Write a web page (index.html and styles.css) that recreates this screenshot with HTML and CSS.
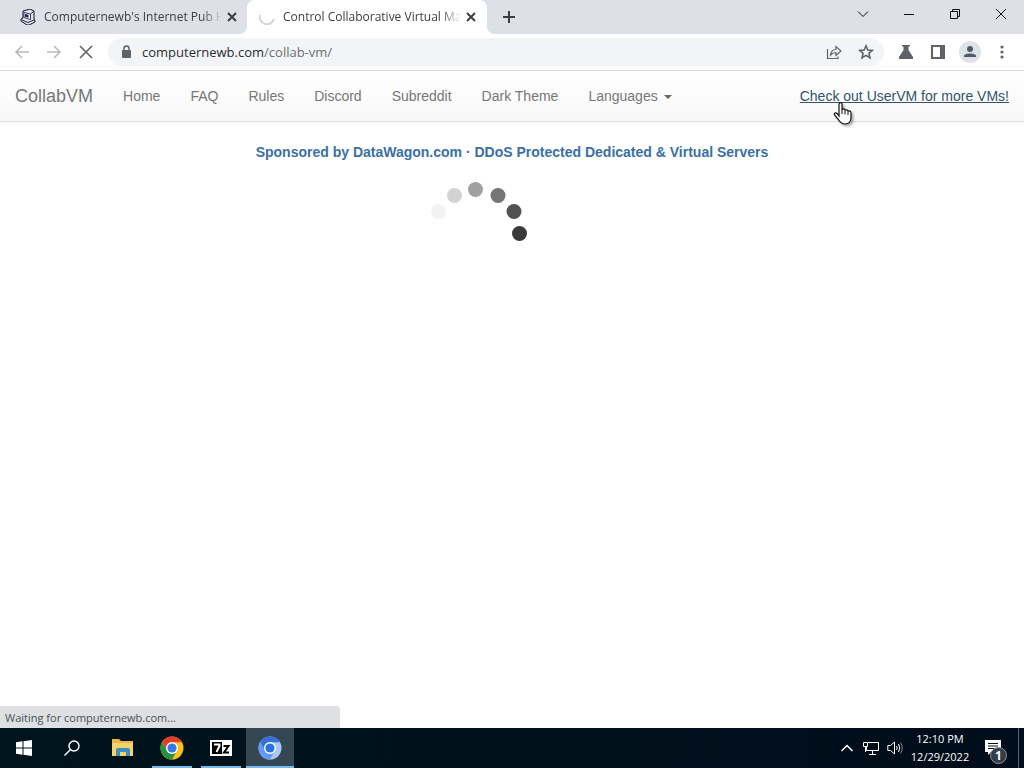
FILE: index.html
```html
<!DOCTYPE html>
<html lang="en">
<head>
<meta charset="utf-8">
<title>Control Collaborative Virtual Machines</title>
<link rel="stylesheet" href="styles.css">
</head>
<body>
<header class="tab-strip">
  <div class="tab">
    <svg class="tab-icon" viewBox="0 0 16 16" aria-hidden="true">
      <path d="M3 2 10 0 14 2V10L15 12V13L9 16H7L1 12V10L3 9Z" fill="#dfe2e8" stroke="#101020"/>
      <path d="M4 3.500 10.500 5V10.500L4 8.500Z" fill="#fff" stroke="#151525" stroke-width=".8"/>
      <path d="M5 5 8.500 5.800V8.800L5 7.800Z" fill="#101a90"/>
      <path d="M10.500 5 13.500 2.500M2 11 8 13.500 14 11" fill="none" stroke="#151525" stroke-width=".9"/>
    </svg>
    <span class="tab-title">Computernewb's Internet Pub Ho</span>
    <button class="tab-close" aria-label="Close tab"><svg viewBox="0 0 16 16"><path d="M4 4 12 12M12 4 4 12"/></svg></button>
  </div>
  <div class="tab tab-active">
    <svg class="tab-icon" viewBox="0 0 16 16" aria-hidden="true"><path d="M1 6A7 7 0 0 0 15 10" fill="none" stroke="#d3d5d9" stroke-width="2"/></svg>
    <span class="tab-title">Control Collaborative Virtual Mac</span>
    <button class="tab-close" aria-label="Close tab"><svg viewBox="0 0 16 16"><path d="M4 4 12 12M12 4 4 12"/></svg></button>
  </div>
  <button class="new-tab" aria-label="New tab"><svg viewBox="0 0 16 16"><path d="M8 2V14M2 8H14"/></svg></button>
  <div class="window-controls">
    <button aria-label="Search tabs"><svg viewBox="0 0 12 12"><path d="M1 3.500 6 8.500 11 3.500"/></svg></button>
    <button aria-label="Minimize"><svg viewBox="0 0 12 12"><path d="M1 6.500H11"/></svg></button>
    <button aria-label="Restore"><svg viewBox="0 0 12 12"><path d="M1.500 3.500H8.500V10.500H1.500ZM3.500 3.500V1.500H10.500V8.500H8.500"/></svg></button>
    <button aria-label="Close"><svg viewBox="0 0 12 12"><path d="M1 1 11 11M11 1 1 11"/></svg></button>
  </div>
</header>

<div class="toolbar">
  <div class="tool-group">
    <button class="tool faded" aria-label="Back"><svg viewBox="0 0 16 16"><path class="line" d="M15 8H2M8 2 2 8 8 14"/></svg></button>
    <button class="tool faded" aria-label="Forward"><svg viewBox="0 0 16 16"><path class="line" d="M1 8H14M8 2 14 8 8 14"/></svg></button>
    <button class="tool" aria-label="Stop"><svg viewBox="0 0 16 16"><path class="line" d="M2 2 14 14M14 2 2 14"/></svg></button>
  </div>
  <div class="address">
    <svg class="lock" viewBox="0 0 16 16" aria-hidden="true"><rect x="4" y="6" width="9" height="8" rx="1" fill="#5f6368"/><path d="M6 6.500V4.500A2.500 2.500 0 0 1 11 4.500V6.500" fill="none" stroke="#5f6368" stroke-width="1.500"/></svg>
    <a class="url" href="#">computernewb.com<span class="url-path">/collab-vm/</span></a>
    <button class="tool" aria-label="Share"><svg viewBox="0 0 16 16"><path class="thin" d="M1.500 5V14.500H12V12.500M4.500 11C5 7.500 7 5.500 10 5.500V2.500L15 7 10 11.500V8.500C7.500 8.500 6 9.200 4.500 11Z"/></svg></button>
    <button class="tool" aria-label="Bookmark"><svg viewBox="0 0 16 16"><path class="thick" d="M8 1.800 9.800 6 14.300 6.400 10.900 9.300 12 13.800 8 11.400 4 13.800 5.100 9.300 1.700 6.400 6.200 6Z"/></svg></button>
  </div>
  <div class="tool-group">
    <button class="tool" aria-label="Experiments"><svg viewBox="0 0 16 16"><path d="M4 1H12V2.500H10.500V6L15 13V15H1V13L5.500 6V2.500H4Z" fill="#5f6368"/></svg></button>
    <button class="tool" aria-label="Side panel"><svg viewBox="0 0 16 16"><path d="M1 1H15V15H1ZM3 3V13H10V3Z" fill="#5f6368" fill-rule="evenodd"/></svg></button>
    <button class="tool avatar" aria-label="Profile"><svg viewBox="0 0 22 22"><circle cx="11" cy="11" r="11" fill="#dee3ea"/><circle cx="11" cy="8" r="3" fill="#4f5b66"/><path d="M5 16V15C5 11.500 17 11.500 17 15V16Z" fill="#4f5b66"/></svg></button>
    <button class="tool" aria-label="Menu"><svg viewBox="0 0 16 16" fill="#5f6368"><circle cx="8" cy="3" r="1.600"/><circle cx="8" cy="8" r="1.600"/><circle cx="8" cy="13" r="1.600"/></svg></button>
  </div>
</div>

<main class="page">
  <nav class="navbar">
    <a class="brand" href="#">CollabVM</a>
    <a class="nav-link" href="#">Home</a>
    <a class="nav-link" href="#">FAQ</a>
    <a class="nav-link" href="#">Rules</a>
    <a class="nav-link" href="#">Discord</a>
    <a class="nav-link" href="#">Subreddit</a>
    <a class="nav-link" href="#">Dark Theme</a>
    <a class="nav-link" href="#">Languages<span class="caret"></span></a>
    <div class="promo">
      <a class="promo-link" href="#">Check out UserVM for more VMs!</a>
      <svg class="pointer" viewBox="0 0 20 26" aria-hidden="true"><path d="M6 15V3.500C6 1 9 1 9 3.500V9C9.500 7.500 12 7.500 12 9.500 12.500 8.300 15 8.500 15 10.500 15.500 9.500 18 9.500 18 12V17C18 20 16 23 12 23 8 23 6.500 20.500 5 18L1.500 14C.5 12 3 11.500 4 12.500Z" fill="#fff" stroke="#111" stroke-width="1.200"/><path d="M9 9V13M12 9.500V13.500M15 10.500V14" stroke="#111"/></svg>
    </div>
  </nav>
  <p class="sponsor"><a href="#">Sponsored by DataWagon.com · DDoS Protected Dedicated &amp; Virtual Servers</a></p>
  <svg class="spinner" viewBox="0 0 168 96" role="img" aria-label="Loading">
    <circle cx="10.500" cy="26.500" r="7.500" fill="#f2f2f2"/>
    <circle cx="26.500" cy="10.500" r="7.500" fill="#d3d3d3"/>
    <circle cx="47.500" cy="4.500" r="7.500" fill="#a0a0a0"/>
    <circle cx="70" cy="10.500" r="7.500" fill="#757575"/>
    <circle cx="86" cy="26.500" r="7.500" fill="#525252"/>
    <circle cx="91.500" cy="48.500" r="7.500" fill="#393939"/>
  </svg>
  <div class="status">Waiting for computernewb.com...</div>
</main>

<footer class="taskbar">
  <button class="task" aria-label="Start"><svg class="i16" viewBox="0 0 16 16" fill="#fff"><path d="M0 2.200 6.500 1.300V7.500H0ZM7.500 1.200 16 0V7.500H7.500ZM0 8.500H6.500V14.700L0 13.800ZM7.500 8.500H16V16L7.500 14.800Z"/></svg></button>
  <button class="task" aria-label="Search"><svg class="i16" viewBox="0 0 16 16" fill="none" stroke="#fff" stroke-width="1.400"><circle cx="10" cy="6" r="5"/><path d="M6.300 9.700.5 15.500"/></svg></button>
  <div class="pinned">
    <button class="task" aria-label="File Explorer"><svg viewBox="0 0 24 24"><path d="M1 3H8L10 5H22V20H1Z" fill="#e9b84c"/><path d="M1 7H22V20H1Z" fill="#f7d268"/><path d="M5 20V14Q5 12 7 12H17Q19 12 19 14V20H15V16H9V20Z" fill="#3d8fbd"/></svg></button>
    <button class="task running" aria-label="Google Chrome"><svg viewBox="0 0 24 24"><circle cx="12" cy="12" r="11.500" fill="#fbc116"/><path d="M2.040 6.250A11.500 11.500 0 0 1 21.960 6.250H12L7.020 14.870Z" fill="#e33b2e"/><path d="M2.040 6.250A11.500 11.500 0 0 0 12 23.500L16.980 14.870 12 17.700 7.020 14.870Z" fill="#229342"/><circle cx="12" cy="12" r="6" fill="#fff"/><circle cx="12" cy="12" r="4.600" fill="#3478e5"/></svg></button>
    <button class="task running" aria-label="7-Zip"><svg viewBox="0 0 24 24"><path d="M1 4H23V20H1Z" fill="#fff"/><path d="M3 6H13V18H3Z" fill="#000"/><path d="M5 8.500H10.500V10L7.500 16" fill="none" stroke="#fff" stroke-width="2"/><path d="M14.500 10H19.500L15 16.500H20" fill="none" stroke="#000" stroke-width="2"/></svg></button>
    <button class="task running current" aria-label="Chromium"><svg viewBox="0 0 24 24"><circle cx="12" cy="12" r="11.500" fill="#a9c9fa"/><path d="M2.040 6.250A11.500 11.500 0 0 1 21.960 6.250H12L7.020 14.870Z" fill="#3870d8"/><path d="M2.040 6.250A11.500 11.500 0 0 0 12 23.500L16.980 14.870 12 17.700 7.020 14.870Z" fill="#639af5"/><circle cx="12" cy="12" r="6" fill="#fff"/><circle cx="12" cy="12" r="4.600" fill="#2b72df"/></svg></button>
  </div>
  <div class="tray">
    <button class="tray-button" aria-label="Show hidden icons"><svg class="i16" viewBox="0 0 16 16"><path d="M2.500 11 8 5.500 13.500 11" stroke-width="1.500"/></svg></button>
    <button class="tray-button" aria-label="Network"><svg class="i16" viewBox="0 0 16 16"><path d="M5 2.500H15.500V10.500H3.500V7M9.500 11V14M6 14.500H13M.5 2.500H4.500V6.500H.5ZM2.500 6.500V12"/></svg></button>
    <button class="tray-button" aria-label="Volume"><svg class="i16" viewBox="0 0 16 16"><path d="M.8 5.500H3.500L7.500 2V14L3.500 10.500H.8ZM9.500 6Q11 8 9.500 10M11.500 4Q14 8 11.500 12"/><path d="M13.500 2.500Q17 8 13.500 13.500" opacity=".5"/></svg></button>
    <time class="clock" datetime="2022-12-29T12:10"><span>12:10 PM</span><span>12/29/2022</span></time>
    <button class="notices" aria-label="Notifications"><svg viewBox="0 0 16 16"><path d="M0 0H16V12H6L3 15V12H0Z" fill="#fff"/><path d="M3 3.500H13M3 6H13M3 8.500H10" stroke="#00101c"/></svg><span class="badge">1</span></button>
    <span class="show-desktop"></span>
  </div>
</footer>
</body>
</html>
```
FILE: styles.css
```css
* { box-sizing: border-box; }

body {
  margin: 0;
  min-height: 100vh;
  display: flex;
  flex-direction: column;
  background: #fff;
  color: #3c4043;
  font: 12px/16px "Open Sans", "Noto Sans", sans-serif;
}

button {
  margin: 0;
  padding: 0;
  border: 0;
  background: none;
  color: inherit;
  font: inherit;
  display: flex;
  align-items: center;
  justify-content: center;
}

a { text-decoration: none; }
svg { display: block; flex: none; }

/* Tabs */
.tab-strip {
  height: 34px;
  display: flex;
  padding-left: 8px;
  background: #dde0e6;
}

.tab {
  flex: 0 1 239px;
  min-width: 0;
  display: flex;
  align-items: center;
  padding: 0 7px 0 12px;
}

.tab-active {
  position: relative;
  flex-basis: 240px;
  padding-right: 8px;
  border-radius: 8px 8px 0 0;
  background: #fff;
}

.tab-active::before,
.tab-active::after {
  content: "";
  position: absolute;
  bottom: 0;
  width: 8px;
  height: 8px;
}

.tab-active::before {
  right: 100%;
  background: radial-gradient(circle at 0 0, transparent 8px, #fff 8px);
}

.tab-active::after {
  left: 100%;
  background: radial-gradient(circle at 100% 0, transparent 8px, #fff 8px);
}

.tab-icon { width: 16px; height: 16px; }

.tab-title {
  flex: 1;
  min-width: 0;
  margin: 0 2px 0 8px;
  overflow: hidden;
  white-space: nowrap;
  -webkit-mask-image: linear-gradient(to left, transparent, #000 20px);
  mask-image: linear-gradient(to left, transparent, #000 20px);
}

.tab-close svg,
.new-tab svg {
  width: 16px;
  height: 16px;
  fill: none;
  stroke: #3c4043;
  stroke-width: 2;
}

.new-tab { width: 28px; margin-left: 8px; }

.window-controls { display: flex; margin-left: auto; padding-bottom: 6px; }
.window-controls button { width: 46px; }
.window-controls svg { width: 12px; height: 12px; fill: none; stroke: #111; }

/* Toolbar */
.toolbar {
  height: 37px;
  display: flex;
  align-items: center;
  gap: 6px;
  padding: 0 6px;
  border-bottom: 1px solid #d9dadc;
}

.tool-group { display: flex; }
.tool { width: 32px; height: 28px; }
.tool svg { width: 16px; height: 16px; }
.tool .line { fill: none; stroke: #5f6368; stroke-width: 1.6; }
.faded .line { stroke: #b8babd; }
.tool .thin { fill: none; stroke: #5f6368; stroke-width: 1.2; }
.tool .thick { fill: none; stroke: #5f6368; stroke-width: 1.6; }
.avatar svg { width: 22px; height: 22px; }

.address {
  flex: 1;
  min-width: 0;
  display: flex;
  align-items: center;
  height: 28px;
  padding: 0 2px 0 10px;
  border-radius: 14px;
  background: #f3f4f5;
}

.lock { width: 16px; height: 16px; margin-right: 8px; }
.url { flex: 1; color: #2b2d30; font-size: 13px; }
.url-path { color: #6b6f74; }

/* Page */
.page {
  position: relative;
  flex: 1;
  font: 14px/20px "Liberation Sans", Arial, sans-serif;
}

.navbar {
  height: 51px;
  display: flex;
  align-items: center;
  padding: 0 15px 0 0;
  border-bottom: 1px solid #e0e0e0;
  background: linear-gradient(#fff, #f8f8f8);
  box-shadow: 0 1px 4px rgba(0, 0, 0, 0.06);
}

.brand { padding: 0 15px; color: #777; font-size: 18px; }
.nav-link { padding: 0 15px; color: #777; white-space: nowrap; }

.caret {
  display: inline-block;
  margin-left: 6px;
  vertical-align: middle;
  border-top: 4px solid #666;
  border-left: 4px solid transparent;
  border-right: 4px solid transparent;
}

.promo { position: relative; margin-left: auto; white-space: nowrap; }
.promo-link { color: #35536c; text-decoration: underline; }

.pointer {
  position: absolute;
  top: 15px;
  left: 33px;
  width: 20px;
  height: 26px;
  filter: drop-shadow(2px 2px 1px rgba(0, 0, 0, 0.3));
}

.sponsor { margin: 20px 0 32px; text-align: center; font-weight: bold; }
.sponsor a { color: #3a70a5; }

.spinner {
  width: 168px;
  height: 96px;
  margin: -9px auto 0;
  overflow: visible;
}

.status {
  position: absolute;
  left: 0;
  bottom: 0;
  width: 340px;
  height: 22px;
  padding: 4px 5px 2px;
  border-radius: 0 4px 0 0;
  background: #dee0e4;
  color: #4b4f54;
  font: 11px/16px "Open Sans", "Noto Sans", sans-serif;
}

/* Taskbar */
.taskbar {
  height: 40px;
  display: flex;
  background: linear-gradient(90deg, #00141d, #000d1a);
  color: #fff;
}

.pinned { display: flex; gap: 1px; margin-left: 3px; }
.task { width: 48px; height: 40px; }
.task svg { width: 24px; height: 24px; }

.running {
  background: linear-gradient(#76b9ed, #76b9ed) bottom / 40px 2px no-repeat;
}

.current {
  background: linear-gradient(#76b9ed, #76b9ed) bottom / 48px 2px no-repeat #344752;
}

.task .i16,
.i16 { width: 16px; height: 16px; }

.tray { display: flex; align-items: center; margin-left: auto; }
.tray-button { width: 24px; height: 40px; }
.tray-button svg { fill: none; stroke: #fff; }

.clock {
  width: 66px;
  display: flex;
  flex-direction: column;
  align-items: center;
  font-size: 11px;
  line-height: 18px;
}

.notices { position: relative; width: 40px; height: 40px; margin-right: 5px; }
.notices svg { width: 16px; height: 16px; }

.badge {
  position: absolute;
  right: 6px;
  bottom: 4px;
  width: 17px;
  height: 17px;
  border: 1px solid #8d969d;
  border-radius: 50%;
  background: #333d47;
  font-weight: bold;
  line-height: 15px;
  text-align: center;
}

.show-desktop { width: 6px; height: 40px; border-left: 1px solid #5b626c; }
```
